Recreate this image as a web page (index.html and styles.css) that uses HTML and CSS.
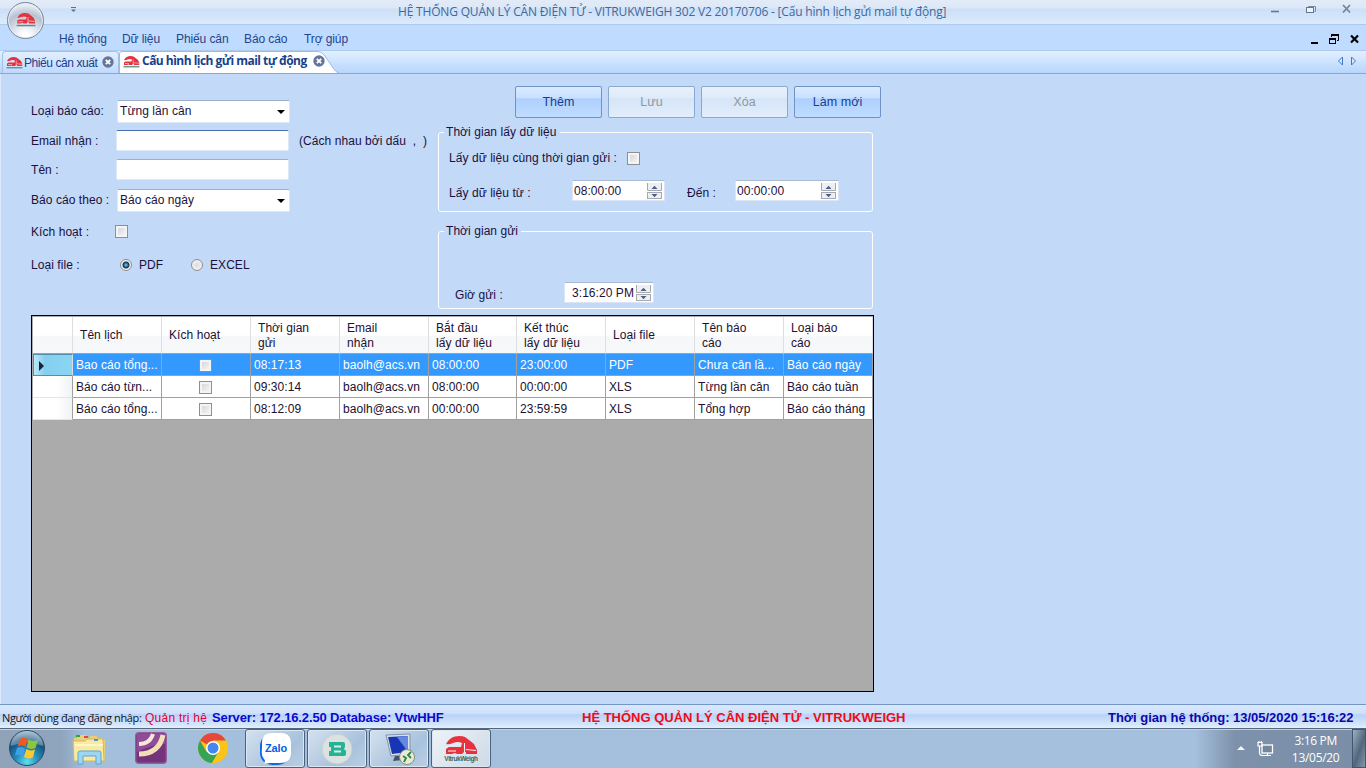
FILE: index.html
```html
<!DOCTYPE html>
<html lang="vi">
<head>
<meta charset="utf-8">
<title>HỆ THỐNG QUẢN LÝ CÂN ĐIỆN TỬ</title>
<link rel="stylesheet" href="styles.css">
</head>
<body>
<svg class="defs" width="0" height="0">
  <defs>
    <symbol id="truckbody" viewBox="0 0 32 19">
      <path fill="#e5323e" d="M1 8Q4 2 10 .5Q16 -.5 20 1L24 4L29 8L32 14V18H21V16H19L17 18H12L10 17L7 18H1V13L4 11H16L17 7Q13 5 8 7Q4 9 1 8Z"/>
      <path fill="none" stroke="#f5f2f4" stroke-width="1.100" d="M19.500 7V16M3 15H11M21 13.500L31 14.500"/>
    </symbol>
    <symbol id="truck" viewBox="0 0 34 24">
      <use href="#truckbody" x="1" y="0" width="32" height="19"/>
      <path d="M1 21.500H33" stroke="#5d8d82" stroke-width="2.600"/>
    </symbol>
    <symbol id="close" viewBox="0 0 12 12">
      <circle cx="6" cy="6" r="5.700" fill="#65769a"/>
      <path d="M3.800 3.800L8.200 8.200M8.200 3.800L3.800 8.200" stroke="#fff" stroke-width="1.900"/>
    </symbol>
    <symbol id="spin" viewBox="0 0 15 16">
      <path d="M.5 0V7.500H14.500V0" fill="#eeeff2" stroke="#a6a9ae"/>
      <rect x=".5" y="9.500" width="14" height="6" fill="#eeeff2" stroke="#a6a9ae"/>
      <path d="M4.500 6L7.500 2.800L10.500 6Z M4.500 11L7.500 14.200L10.500 11Z" fill="#4a5f8c"/>
    </symbol>
  </defs>
</svg>
<header class="titlebar">
  <svg class="quick" width="6" height="6"><path d="M0 .5H5" stroke="#56708f"/><path d="M0 2.500H5L2.500 5Z" fill="#56708f"/></svg>
  <span class="title">HỆ THỐNG QUẢN LÝ CÂN ĐIỆN TỬ - VITRUKWEIGH 302 V2 20170706 - [Cấu hình lịch gửi mail tự động]</span>
  <svg class="winctl" width="84" height="14">
    <path d="M0 10.500H8" stroke="#65788f" stroke-width="1.600"/>
    <path d="M37.500 6.500V5.500H44.500V10.500H43.500" fill="none" stroke="#7a8b9e"/><rect x="35.500" y="6.500" width="7" height="5" fill="#eef4fb" stroke="#65788f"/>
    <path d="M72 4L79 11.500M79 4L72 11.500" stroke="#72859a" stroke-width="1.800"/>
  </svg>
</header>
<div class="orb"><svg width="20" height="14"><use href="#truck"/></svg></div>
<nav class="menubar">
  <span class="m1">Hệ thống</span><span class="m2">Dữ liệu</span><span class="m3">Phiếu cân</span><span class="m4">Báo cáo</span><span class="m5">Trợ giúp</span>
  <svg class="mdictl" width="50" height="14">
    <path d="M1 11H8" stroke="#000" stroke-width="2"/>
    <path d="M21.500 5V3.500H28.500V8.500H27" fill="none" stroke="#000"/><path d="M21 3H29" stroke="#000" stroke-width="2"/><rect x="19.500" y="6.500" width="6" height="5" fill="#bfdbff" stroke="#000"/><path d="M19 7H26" stroke="#000" stroke-width="2"/>
    <path d="M41 3.500L48 10.500M48 3.500L41 10.500" stroke="#000" stroke-width="2.200"/>
  </svg>
</nav>
<div class="tabs">
  <div class="tab tab-idle"><svg width="17" height="12"><use href="#truck"/></svg><span>Phiếu cân xuất</span><svg class="x" width="12" height="12"><use href="#close"/></svg></div>
  <div class="tab tab-active">
    <svg class="shape" width="220" height="22"><path d="M.5 22V3Q.5 .5 3 .5H199Q203 .5 206 5L214 17Q217 21.500 220 22Z" fill="#fff"/><path d="M.5 22V3Q.5 .5 3 .5H199Q203 .5 206 5L214 17Q217 21.500 220 22" fill="none" stroke="#9dbce4"/></svg>
    <svg width="17" height="12"><use href="#truck"/></svg><b>Cấu hình lịch gửi mail tự động</b><svg class="x" width="12" height="12"><use href="#close"/></svg>
  </div>
  <svg class="arrows" width="22" height="12"><path d="M5.500 2V10L1.500 6Z M14.500 2V10L18.500 6Z" fill="#d9eaff" stroke="#3f78c4"/></svg>
</div>
<main class="content">
  <div class="upper">
    <section class="form">
      <label>Loại báo cáo:</label><div class="field select"><span>Từng lần cân</span><i class="caret"></i></div>
      <label>Email nhận :</label><div class="line"><div class="field focus"></div><span class="hint">(Cách nhau bởi dấu &nbsp;, &nbsp;)</span></div>
      <label>Tên :</label><div class="field"></div>
      <label>Báo cáo theo :</label><div class="field select low"><span>Báo cáo ngày</span><i class="caret"></i></div>
      <label>Kích hoạt :</label><i class="check lone"></i>
      <label>Loại file :</label><div class="radios"><i class="radio on"></i><span class="pdf">PDF</span><i class="radio"></i><span>EXCEL</span></div>
    </section>
    <section class="side">
      <div class="buttons"><div class="btn">Thêm</div><div class="btn off">Lưu</div><div class="btn off">Xóa</div><div class="btn">Làm mới</div></div>
      <fieldset class="g1">
        <legend>Thời gian lấy dữ liệu</legend>
        <div class="grow same"><span>Lấy dữ liệu cùng thời gian gửi :</span><i class="check"></i></div>
        <div class="grow range"><span class="from">Lấy dữ liệu từ :</span><div class="time t1"><span>08:00:00</span><svg width="15" height="16"><use href="#spin"/></svg></div><span class="to">Đến :</span><div class="time t2"><span>00:00:00</span><svg width="15" height="16"><use href="#spin"/></svg></div></div>
      </fieldset>
      <fieldset class="g2">
        <legend>Thời gian gửi</legend>
        <div class="grow send"><span class="at">Giờ gửi :</span><div class="time t3"><span>3:16:20 PM</span><svg width="15" height="16"><use href="#spin"/></svg></div></div>
      </fieldset>
    </section>
  </div>
  <div class="gridbox">
    <table>
      <colgroup><col class="c0"><col><col><col><col><col class="c5"><col><col><col><col></colgroup>
      <thead><tr><th></th><th>Tên lịch</th><th>Kích hoạt</th><th>Thời gian<br>gửi</th><th>Email<br>nhận</th><th>Bắt đầu<br>lấy dữ liệu</th><th>Kết thúc<br>lấy dữ liệu</th><th>Loại file</th><th>Tên báo<br>cáo</th><th>Loại báo<br>cáo</th></tr></thead>
      <tbody>
        <tr class="sel"><td class="rh"><svg width="6" height="10"><path d="M0 0L5 5L0 10Z" fill="#1d2330"/></svg></td><td>Bao cáo tổng...</td><td class="ck"><i class="check"></i></td><td>08:17:13</td><td>baolh@acs.vn</td><td>08:00:00</td><td>23:00:00</td><td>PDF</td><td>Chưa cân lầ...</td><td>Báo cáo ngày</td></tr>
        <tr><td class="rh"></td><td>Báo cáo từn...</td><td class="ck"><i class="check"></i></td><td>09:30:14</td><td>baolh@acs.vn</td><td>08:00:00</td><td>00:00:00</td><td>XLS</td><td>Từng lần cân</td><td>Báo cáo tuần</td></tr>
        <tr><td class="rh"></td><td>Báo cáo tổng...</td><td class="ck"><i class="check"></i></td><td>08:12:09</td><td>baolh@acs.vn</td><td>00:00:00</td><td>23:59:59</td><td>XLS</td><td>Tổng hợp</td><td>Báo cáo tháng</td></tr>
      </tbody>
    </table>
  </div>
</main>
<footer class="status">
  <span class="user">Người dùng đang đăng nhập:</span><span class="role">Quản trị hệ</span><b class="server">Server: 172.16.2.50 Database: VtwHHF</b><b class="sys">HỆ THỐNG QUẢN LÝ CÂN ĐIỆN TỬ - VITRUKWEIGH</b><b class="clock">Thời gian hệ thống: 13/05/2020 15:16:22</b>
</footer>
<div class="taskbar">
  <svg class="start" width="38" height="38" viewBox="0 0 38 38">
    <defs><radialGradient id="o" cx=".5" cy=".9" r=".9"><stop offset="0" stop-color="#5fe0f4"/><stop offset=".35" stop-color="#2590bd"/><stop offset=".7" stop-color="#17527f"/><stop offset="1" stop-color="#8fb4cb"/></radialGradient></defs>
    <circle cx="19" cy="19" r="17.500" fill="url(#o)" stroke="#2c4a66"/>
    <path d="M3 17A16 15 0 0 1 35 17Q19 10 3 17Z" fill="#fff" opacity=".3"/>
    <path d="M12 10Q15.500 7 19.500 10L17.500 18Q14 15.500 9.500 17.500Z" fill="#ee5a24"/><path d="M20.500 10.500Q24.500 13 30 11L27.500 19Q23 21 18.500 18.500Z" fill="#8cc63e"/><path d="M9 19Q13 17 17 19.500L15 27.500Q12 24.500 7 26.500Z" fill="#3fa0e8"/><path d="M18.300 20Q22 22.500 27 20.500L25 28.500Q20.500 30.500 16 28Z" fill="#fdc82f"/>
  </svg>
  <svg class="folder" width="34" height="32" viewBox="0 0 34 32">
    <path d="M2 5H5V2H14L15 5H18V3H25V5H30V7H33V28H2Z" fill="#e9d078"/><path d="M1 8H13L15 6H31L32 28H2Z" fill="#f7eaa4" stroke="#d4b760"/><path d="M4 2H8V4H4Z" fill="#2ba53e"/><path d="M12 3H16V5H12Z" fill="#e14a3b"/><path d="M22 6H26V8H22Z" fill="#4f95d7"/><path d="M3 12H31" stroke="#fff6c6" stroke-width="2"/>
    <path d="M6 31V20Q6 18 8 18H27Q29 18 29 20V31H24V23H11V31Z" fill="#9dd6f2" stroke="#5fa5cf"/>
  </svg>
  <svg class="purple" width="32" height="32" viewBox="0 0 32 32">
    <rect x=".7" y=".7" width="30.600" height="30.600" rx="3" fill="#73347c" stroke="#945e9d" stroke-width="1.400"/><path d="M2 2H30V12Q18 12 2 20Z" fill="#a45eaa" opacity=".6"/>
    <path d="M4 12Q15 12 18 2" fill="none" stroke="#f5e9dc" stroke-width="4"/><path d="M4 22Q24 22 28 3" fill="none" stroke="#f2dfb5" stroke-width="5"/>
  </svg>
  <svg class="chrome" width="30" height="30" viewBox="0 0 30 30">
    <circle cx="15" cy="15" r="15" fill="#fbc416"/><path d="M15 15L2 7.500A15 15 0 0 1 28 7.500H15Z" fill="#e5493a"/><path d="M15 15L8.500 18.700L2 7.500A15 15 0 0 0 14 30L21 18.500Z" fill="#35a455"/><path d="M15 8H28A15 15 0 0 1 14 30L21 18Z" fill="#fbc416"/><circle cx="15" cy="15" r="7" fill="#fff"/><circle cx="15" cy="15" r="5.500" fill="#4487ee"/>
  </svg>
  <div class="apps">
    <div class="app"><svg width="34" height="34" viewBox="0 0 34 34"><rect x="2" y="2" width="30" height="31" rx="12" fill="#1168e8"/><path d="M13 1H23Q33 1 33 12V21Q33 31 22 31H11Q8 32 6 31Q8 29 6 27Q3 23 4 17V11Q4 1 13 1Z" fill="#fff"/><text x="18" y="19.500" text-anchor="middle" class="zalo">Zalo</text></svg></div>
    <div class="app"><svg width="32" height="32" viewBox="0 0 32 32"><circle cx="16" cy="16" r="15" fill="#dce2df" stroke="#c1d1d8"/><path d="M8 9H22Q24 9 24 11V14L23 16L25 18V21Q25 23 23 23H8V18H10V14H8Z" fill="#23b493"/><path d="M13 13.500H20M13 18.500H20" stroke="#dceae6" stroke-width="2.200"/></svg></div>
    <div class="app"><svg width="34" height="34" viewBox="0 0 34 34"><path d="M4 3L28 2V22L9 24Z" fill="#d9e1ea" stroke="#8194aa"/><path d="M6 5L26 4V20L10 22Z" fill="#1736b6"/><path d="M15 5L26 4V20Z" fill="#6289e0"/><path d="M13 24H20L21 28L11 29Z" fill="#465263"/><circle cx="25" cy="25" r="7.500" fill="#e7ebd8" stroke="#858f78"/><path d="M21 24L24 26L22 30M29 20L26 23L29 26" fill="none" stroke="#328343" stroke-width="1.800"/></svg></div>
    <div class="app active"><svg width="36" height="32" viewBox="0 0 36 32"><use href="#truckbody" x="2" y="3" width="32" height="19"/><text x="18" y="28" text-anchor="middle" class="vtw">VitrukWeigh</text></svg></div>
  </div>
  <svg class="up" width="8" height="5"><path d="M0 4L4 0L8 4Z" fill="#f3f7fa"/></svg>
  <svg class="net" width="17" height="16"><rect x="5" y="4" width="10.500" height="8" fill="#74869b" stroke="#fff" stroke-width="1.300"/><path d="M2.500 5V12Q2.500 14.500 6 14.500H14M10.500 12V14M1 1.500H5V5H1ZM2 0V2M4.500 0V2" fill="none" stroke="#fff" stroke-width="1.200"/></svg>
  <div class="time-now"><div>3:16 PM</div><div class="date">13/05/20</div></div>
  <div class="desk"></div>
</div>
</body>
</html>
```
FILE: styles.css
```css
* { box-sizing: border-box; }
body { margin: 0; width: 1366px; height: 768px; overflow: hidden; display: flex; flex-direction: column; background: #c2d9f7; font: 12px/16px "Liberation Sans", Arial, sans-serif; color: #1c103c; letter-spacing: .06px; white-space: nowrap; position: relative; }
svg { display: block; flex: none; }
.defs { position: absolute; }
i { display: block; flex: none; }
.titlebar { flex: 0 0 25px; display: flex; align-items: flex-start; background: linear-gradient(#e3ebf7 0, #dce8f8 8px, #cbdff8 9px, #dcebfc 24px); border-bottom: 1px solid #aecaed; }
.quick { margin: 7px 0 0 71px; }
.title { width: 549px; margin: 4px 0 0 321px; font: 12px/16px "Open Sans", "Noto Sans", sans-serif; color: #43679a; letter-spacing: -.18px; }
.winctl { margin: 1px 0 0 324px; }
.orb { position: absolute; left: 7px; top: 2px; width: 37px; height: 37px; border-radius: 50%; border: 1px solid #78869b; background: radial-gradient(circle at 50% 95%, #fff 10%, #d7deea 38%, #b7c1d0 60%, #edf1f7 85%); box-shadow: inset 0 0 0 1px #e9eef5; display: flex; align-items: center; justify-content: center; z-index: 2; }
.orb svg { margin-bottom: 2px; }
.menubar { flex: 0 0 26px; display: flex; align-items: center; background: #bfdbff; border-bottom: 1px solid #adcaf0; padding: 2px 6px 0 59px; color: #23458c; letter-spacing: -.1px; }
.m1 { width: 63px; } .m2 { width: 54px; } .m3 { width: 68px; } .m4 { width: 60px; } .m5 { width: 60px; }
.mdictl { margin-left: auto; }
.tabs { flex: 0 0 23px; display: flex; align-items: stretch; background: linear-gradient(#e2f0ff, #b7d5fd); border-bottom: 1px solid #83a9d8; padding-left: 2px; color: #17418c; }
.tab { display: flex; align-items: center; }
.tab-idle { width: 117px; padding-left: 3px; border: 1px solid #a3c0e6; border-bottom: 0; border-radius: 4px 4px 0 0; background: linear-gradient(#e2efff, #bfdaff); }
.tab-idle span { width: 74px; margin: 0 4px 0 1px; letter-spacing: -.42px; }
.tab .x { margin-bottom: 2px; }
.tab-active { position: relative; width: 222px; padding-left: 4px; }
.tab-active > * { position: relative; }
.tab-active .shape { position: absolute; left: 0; top: 0; }
.tab-active b { width: 168px; margin: 0 3px 2px 2px; font: bold 12px/16px "Open Sans", "Noto Sans", sans-serif; letter-spacing: -.52px; }
.arrows { margin: 4px 7px 0 auto; }
.content { flex: 1; border-left: 1px solid #dce9fa; padding: 12px 0 0 30px; }
.upper { display: flex; height: 229px; }
.form { width: 407px; padding-top: 10px; display: grid; grid-template-columns: 85px 322px; grid-template-rows: 30px 29px 29px 31px 33px 33px; align-items: center; align-content: start; }
.line, .radios, .grow { display: flex; align-items: center; }
.field { width: 173px; height: 21px; background: #fff; border: 1px solid #dce8f8; border-top-color: #9caec8; border-radius: 2px; }
.focus { border-top-color: #496fac; }
.select { height: 23px; margin-left: 1px; padding: 0 4px 0 2px; display: flex; align-items: center; justify-content: space-between; }
.low { margin-top: 1px; }
.caret { width: 0; border: 4px solid transparent; border-top-color: #000; border-bottom: 0; margin-top: 2px; }
.hint { margin-left: 10px; }
.check { width: 13px; height: 13px; border: 1px solid #8e8f8f; background: linear-gradient(135deg, #cfd1d5, #fafafa); box-shadow: inset 0 0 0 2px #f4f4f4; }
.lone { margin-left: -1px; }
.radios { padding-left: 4px; }
.radio { width: 12px; height: 12px; border: 1px solid #8e8f8f; border-radius: 50%; background: radial-gradient(#ddd, #fafafa); }
.radio.on { background: radial-gradient(circle, #86d6ec 0, #236391 2px, #12314f 3px, #f2f2f2 4px); }
.radios span { margin-left: 7px; } .radios .pdf { width: 52px; }
.side { width: 445px; }
.buttons { display: flex; gap: 6px; margin-left: 77px; height: 32px; }
.btn { width: 87px; height: 32px; border: 1px solid #6f93c5; border-radius: 2px; background: linear-gradient(#dcebff 0, #c9e0ff 35%, #aed0ff 40%, #c0dcff 100%); color: #173f91; font-size: 12.500px; text-align: center; line-height: 31px; }
.off { background: linear-gradient(#e8f1fc 0, #dfebfa 35%, #d5e5f8 40%, #e2eefb 100%); border-color: #8aa8d0; color: #90969f; }
fieldset { margin: 0; min-width: 0; width: 435px; border: 1px solid #fff; border-radius: 3px; padding: 0; }
legend { margin-left: 5px; padding: 0 3px 0 2px; line-height: 14px; height: 14px; }
.g1 { height: 87px; margin-top: 7px; } .g2 { height: 85px; margin-top: 12px; }
.same { margin: 11px 0 0 10px; } .same span { width: 178px; }
.range { margin: 14px 0 0 10px; } .from { width: 123px; } .to { width: 48px; margin-left: 22px; }
.from, .to, .at { padding-top: 4px; }
.time { height: 21px; background: #fff; border: 1px solid #dae6f7; border-top-color: #a9bbd3; display: flex; justify-content: space-between; align-items: center; padding: 0 2px 0 1px; border-radius: 1px; }
.t1 { width: 93px; } .t2 { width: 104px; } .t3 { width: 90px; padding-left: 7px; }
.send { margin: 44px 0 0 16px; } .at { width: 109px; }
.gridbox { width: 843px; height: 377px; border: 1px solid #000; background: #ababab; padding: 1px 0 0 1px; }
table { border-collapse: separate; border-spacing: 0; table-layout: fixed; width: 840px; background: #fff; color: #21102f; }
col { width: 89px; } .c0 { width: 40px; } .c5 { width: 88px; }
th { height: 37px; padding: 1px 0 0 8px; text-align: left; font-weight: normal; line-height: 15px; border-right: 1px solid #dcdee2; border-bottom: 1px solid #a0a0a0; background: linear-gradient(#fff 50%, #f6f7f8 55%, #f7f8fa); }
td { height: 22px; padding: 1px 0 0 4px; border-right: 1px solid #a0a0a0; border-bottom: 1px solid #a0a0a0; line-height: 16px; overflow: hidden; }
th + th { padding-left: 7px; }
td + td { padding-left: 3px; }
.rh { background: linear-gradient(90deg, #fff 60%, #f0f2f4); border-bottom-color: #e3e5e8; }
.sel td { background: #3399ff; color: #fff; }
.sel td.rh { background: linear-gradient(90deg, #b9e7fa, #84cef0 30%, #8bd5f4); border: 1px solid #528fac; border-right-color: #d7dde0; padding-left: 5px; }
.ck .check { margin-left: 34px; }
.status { flex: 0 0 24px; border-top: 1px solid #7595c5; background: linear-gradient(#d8e8fd 0, #cfe1fc 35%, #b9d2f8 43%, #d4e6fc 85%, #e4effd 100%); display: flex; align-items: center; padding: 3px 0 0 2px; letter-spacing: 0; }
.user { width: 143px; color: #111; font: 11px/16px "Open Sans", "Noto Sans", sans-serif; letter-spacing: -.37px; }
.role { width: 67px; color: #e60032; letter-spacing: .25px; }
.status b { font-size: 13px; }
.server { width: 370px; color: #0909ce; letter-spacing: -.13px; }
.sys { width: 526px; color: #f00b15; }
.clock { color: #0a08ac; letter-spacing: -.02px; }
.taskbar { flex: 0 0 40px; height: 40px; min-height: 0; border-top: 1px solid #52677e; background: linear-gradient(90deg, #8fa2b8 0, #8fa5be 62px, #a4bfdc 85px, #a5c0dd 1195px, #7d91aa 1235px, #7a8ea8 100%); box-shadow: inset 0 1px #c0d2e5; display: flex; align-items: center; }
.start { margin: 0 0 1px 8px; } .folder { margin-left: 26px; } .purple { margin: 0 0 1px 29px; } .chrome { margin: 0 0 1px 31px; }
.apps { display: flex; gap: 2px; margin-left: 17px; }
.app { width: 60px; height: 39px; border: 1px solid #4c627c; border-radius: 3px; background: linear-gradient(135deg, #d4e2ef, #a9c2dc 65%, #b9cfe5); box-shadow: inset 0 0 0 1px #dbe7f2; display: flex; align-items: center; justify-content: center; }
.active { background: linear-gradient(135deg, #eff3f7, #ccd9e6); }
.zalo { font: bold 11px "Liberation Sans", sans-serif; fill: #075fe0; letter-spacing: -.2px; }
.vtw { font: bold 6.500px "Liberation Sans", sans-serif; fill: #37665e; letter-spacing: -.4px; }
.up { margin-left: 746px; } .net { margin-left: 12px; }
.time-now { width: 80px; text-align: center; color: #fff; font: 12px/17px "Open Sans", "Noto Sans", sans-serif; letter-spacing: -.35px; padding-left: 5px; }
.date { letter-spacing: -.3px; }
.desk { width: 14px; height: 39px; margin-left: auto; border: 1px solid #42566c; background: linear-gradient(110deg, #9bb0c2 0, #51677e 55%, #8299ab); }
```
